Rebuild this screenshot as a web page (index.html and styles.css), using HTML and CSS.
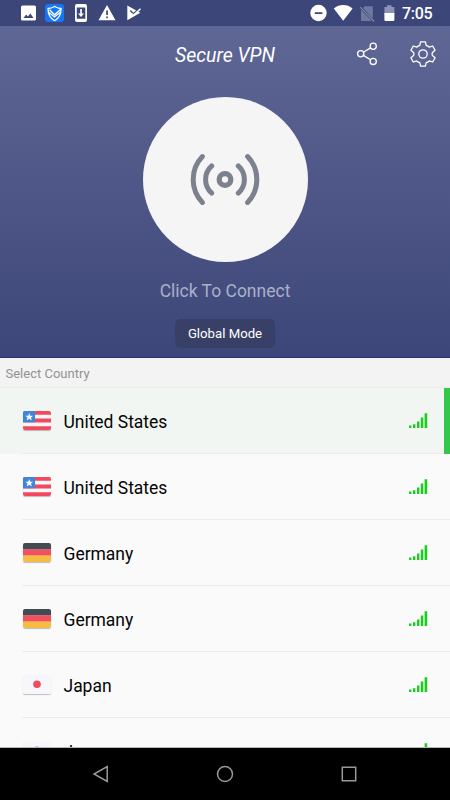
FILE: index.html
```html
<!DOCTYPE html>
<html lang="en">
<head>
<meta charset="utf-8">
<title>Secure VPN</title>
<link rel="stylesheet" href="styles.css">
</head>
<body>
<svg class="defs" aria-hidden="true">
  <symbol id="us" viewBox="0 0 28 19">
    <path fill="#f5f7fa" d="M0 0h28v19H0z"/>
    <path fill="#f2495c" d="M0 0h28v3.800H0zM0 7.600h28v3.800H0zM0 15.200h28V19H0z"/>
    <path fill="#3d86dc" d="M0 0h12v11.200H0z"/>
    <path fill="#fff" d="M6.200 1.900l1.100 2.800 2.900.1L8 6.600l.8 2.800-2.600-1.600-2.500 1.600.8-2.800-2.200-1.800 2.900-.1z"/>
  </symbol>
  <symbol id="de" viewBox="0 0 28 19">
    <path fill="#414b54" d="M0 0h28v6.400H0z"/>
    <path fill="#f05161" d="M0 6.300h28v6.400H0z"/>
    <path fill="#f6bb42" d="M0 12.600h28V19H0z"/>
  </symbol>
  <symbol id="jp" viewBox="0 0 28 19">
    <path fill="#f5f7fa" d="M0 0h28v19H0z"/>
    <circle cx="14" cy="9.300" r="3.800" fill="#ee4b5c"/>
  </symbol>
  <symbol id="bars" viewBox="0 0 19 15">
    <path fill="#18cf1c" d="M0 12.400h2.400V15H0zM4 11.200h2.400V15H4zM8 8.400h2.400V15H8zM11.800 4.500h2.500V15h-2.500zM15.600.3h2.600V15h-2.600z"/>
  </symbol>
</svg>

<div class="phone">
  <div class="status">
    <svg class="status-left" width="120" height="18" viewBox="21 4 120 18">
      <path fill="#fff" fill-rule="evenodd" d="M22.500 5.500h12a1.500 1.500 0 0 1 1.500 1.500v12a1.500 1.500 0 0 1-1.500 1.500h-12A1.500 1.500 0 0 1 21 19V7a1.500 1.500 0 0 1 1.500-1.500zM23.500 18h10l-3.200-4.400-2.400 3-1.700-2z"/>
      <rect x="45" y="4" width="19" height="18" rx="3" fill="#1676f8"/>
      <path fill="none" stroke="#fff" stroke-width="1.300" stroke-linejoin="round" d="M48 8.500c2.600 0 4.500-.8 6.600-2 2 1.200 4 2 6.500 2 0 5.500-1.600 9.500-6.500 12.200-5-2.700-6.600-6.700-6.600-12.200z"/>
      <path fill="none" stroke="#fff" stroke-width="1.300" d="M49.500 9.800l5 5 6.200-5.600M49 12.500l5.500 4.500 5.500-4.500"/>
      <path fill="#fff" fill-rule="evenodd" d="M77 4h8a2 2 0 0 1 2 2v14a2 2 0 0 1-2 2h-8a2 2 0 0 1-2-2V6a2 2 0 0 1 2-2zM76.800 7.500v11.300h8.500V7.500zM80.200 9h1.700v4.500H84L81 17l-3-3.500h2.200z"/>
      <path fill="#fff" fill-rule="evenodd" d="M107 5l8.500 15.300h-17zM106.200 10.500v4.500h1.700v-4.500zM106.200 16.500v1.800h1.700v-1.800z"/>
      <path fill="#fff" d="M127.300 5.500l13 7.300-13 7.400z"/>
      <path fill="none" stroke="#3c4678" stroke-width="1.300" d="M130.300 10.500l3 3.300 7-6.300"/>
      <path fill="none" stroke="#fff" stroke-width="1.500" d="M131.500 13.500l2 1.800 7-6.500"/>
    </svg>
    <svg class="status-right" width="86" height="18" viewBox="310 4 86 18">
      <path fill="#fff" fill-rule="evenodd" d="M318.500 4.800a8.200 8.200 0 1 1 0 16.400 8.200 8.200 0 0 1 0-16.400zM314.800 12.200v1.700h7.600v-1.700z"/>
      <path fill="#fff" d="M343.200 20.800l-9.400-12.300c5.500-4.500 13.300-4.500 18.800 0z"/>
      <path fill="#7077a0" d="M364.800 6.200h8V18.500l-9.700-10.500zM361 9.800l10.800 11.200H361z"/>
      <path fill="none" stroke="#8087ab" stroke-width="1.200" d="M360.200 7.200l14 14.300"/>
      <path fill="#8d93b7" d="M387 5.200h4.500V7h2.900v7h-10V7h2.600z"/>
      <path fill="#fff" d="M384.400 13h10v6.800a1.200 1.200 0 0 1-1.200 1.200h-7.600a1.200 1.200 0 0 1-1.200-1.200z"/>
    </svg>
    <span class="clock">7:05</span>
  </div>

  <header class="hero">
    <div class="toolbar">
      <h1 class="title">Secure VPN</h1>
      <div class="actions">
        <svg width="22" height="24" viewBox="356 42 22 24" fill="none" stroke="#fff" stroke-width="1.300">
          <circle cx="360.700" cy="53.800" r="3.100"/><circle cx="373.200" cy="46.300" r="3.100"/><circle cx="373.200" cy="61.400" r="3.100"/>
          <path d="M363.400 52.200l7.100-4.300M363.400 55.400l7.100 4.400"/>
        </svg>
        <svg width="26" height="28" viewBox="-13 -14 26 28" fill="none" stroke="#fff" stroke-width="1.300" stroke-linejoin="round">
          <circle r="4.200"/>
          <path d="M-2.400-12.200h4.800l.8 3.500q1.700.6 3 1.800l3.500-1.100 2.400 4.200-2.700 2.400q-.6 1.400 0 2.800l2.700 2.400-2.400 4.200-3.500-1.100q-1.300 1.200-3 1.800l-.8 3.500h-4.800l-.8-3.500q-1.700-.6-3-1.800l-3.500 1.100-2.400-4.200 2.700-2.400q.6-1.400 0-2.800l-2.700-2.400 2.400-4.200 3.500 1.100q1.300-1.200 3-1.800z"/>
        </svg>
      </div>
    </div>
    <div class="connect">
      <svg width="72" height="55" viewBox="-36 -27.500 72 55" fill="none" stroke="#7c818e" stroke-width="5" stroke-linecap="round">
        <circle r="5.800" stroke-width="5.300"/>
        <path d="M-13.300-13.600a18.200 18.200 0 0 0 0 27.200M13.300-13.600a18.200 18.200 0 0 1 0 27.200M-22.600-22.900a33 33 0 0 0 0 45.800M22.600-22.900a33 33 0 0 1 0 45.800"/>
      </svg>
    </div>
    <div class="prompt">Click To Connect</div>
    <div class="mode">Global Mode</div>
  </header>

  <div class="section">Select Country</div>
  <main class="list">
    <div class="row selected"><svg class="flag"><use href="#us"/></svg><span class="name">United States</span><svg class="signal"><use href="#bars"/></svg></div>
    <div class="row"><svg class="flag"><use href="#us"/></svg><span class="name">United States</span><svg class="signal"><use href="#bars"/></svg></div>
    <div class="row"><svg class="flag"><use href="#de"/></svg><span class="name">Germany</span><svg class="signal"><use href="#bars"/></svg></div>
    <div class="row"><svg class="flag"><use href="#de"/></svg><span class="name">Germany</span><svg class="signal"><use href="#bars"/></svg></div>
    <div class="row"><svg class="flag"><use href="#jp"/></svg><span class="name">Japan</span><svg class="signal"><use href="#bars"/></svg></div>
    <div class="row"><svg class="flag"><use href="#jp"/></svg><span class="name">Japan</span><svg class="signal"><use href="#bars"/></svg></div>
  </main>

  <nav class="nav">
    <svg width="18" height="18" viewBox="0 0 18 18"><path d="M15.200 1.500v15L2 9z"/></svg>
    <svg width="18" height="18" viewBox="0 0 18 18"><circle cx="9" cy="9" r="7.500"/></svg>
    <svg width="18" height="18" viewBox="0 0 18 18"><path d="M2.300 2.300h13.400v13.400H2.300z"/></svg>
  </nav>
</div>
</body>
</html>
```

FILE: styles.css
```css
* { box-sizing: border-box; }

body {
  margin: 0;
  font-family: Roboto, sans-serif;
}

svg { display: block; flex: none; }

.defs { position: absolute; width: 0; height: 0; }

.phone {
  display: flex;
  flex-direction: column;
  width: 450px;
  height: 800px;
  overflow: hidden;
  background: #fafafa;
}

.status {
  display: flex;
  flex: none;
  align-items: center;
  height: 26px;
  padding: 0 17px 0 21px;
  background: #3c4678;
}

.status-right { margin-left: auto; }

.clock {
  width: 31px;
  margin-left: 6px;
  padding-top: 2px;
  color: #fff;
  font-size: 16px;
  font-weight: 500;
  letter-spacing: -.3px;
  line-height: 26px;
  white-space: nowrap;
}

.hero {
  display: flex;
  flex: none;
  flex-direction: column;
  align-items: center;
  height: 332px;
  background: linear-gradient(#5f6795, #3c4678);
  border-bottom: 1px solid #253573;
}

.toolbar {
  display: grid;
  grid-template-columns: 1fr auto 1fr;
  align-items: center;
  width: 100%;
  height: 56px;
  padding: 0 14px;
}

.title {
  grid-column: 2;
  margin: 2px 0 0;
  color: #fff;
  font-size: 19.5px;
  font-style: italic;
  font-weight: 400;
}

.actions {
  display: flex;
  gap: 32px;
  align-items: center;
  justify-content: flex-end;
}

.connect {
  display: flex;
  align-items: center;
  justify-content: center;
  width: 165px;
  height: 165px;
  margin-top: 15px;
  background: #f5f5f5;
  border-radius: 50%;
}

.prompt {
  margin-top: 17px;
  color: #abb0ca;
  font-size: 17.5px;
  line-height: 24px;
}

.mode {
  width: 100px;
  height: 29px;
  margin-top: 16px;
  color: #fff;
  font-size: 13.2px;
  line-height: 29px;
  text-align: center;
  background: #394067;
  border-radius: 5px;
}

.section {
  flex: none;
  height: 30px;
  padding-left: 5.5px;
  color: #929292;
  font-size: 13px;
  line-height: 31px;
  background: #f3f3f3;
  border-bottom: 1px solid #e8e9e8;
}

.list {
  flex: 1;
  min-height: 0;
  overflow: hidden;
  border-bottom: 1px solid #b4b4b4;
}

.row {
  display: flex;
  align-items: center;
  height: 66px;
  padding: 0 22px 0 23px;
  background: linear-gradient(#ebebeb, #ebebeb) 22px 100% / 100% 1px no-repeat;
}

.selected {
  padding-right: 16px;
  background-color: #f1f6f2;
  border-right: 6px solid #34c84a;
}

.flag {
  width: 28px;
  height: 19px;
  margin-top: -1px;
  border-radius: 2px;
  box-shadow: 0 1px 1px rgba(0, 0, 0, .25);
}

.name {
  margin-left: 12.5px;
  padding-top: 2px;
  color: #050505;
  font-size: 17.5px;
  letter-spacing: -.03px;
  line-height: 24px;
}

.signal {
  width: 19px;
  height: 15px;
  margin: -1px 0 0 auto;
}

.nav {
  display: flex;
  flex: none;
  justify-content: space-between;
  align-items: center;
  height: 52px;
  padding: 0 92px;
  background: #000;
}

.nav svg {
  fill: none;
  stroke: #999;
  stroke-width: 1.5;
}
```
